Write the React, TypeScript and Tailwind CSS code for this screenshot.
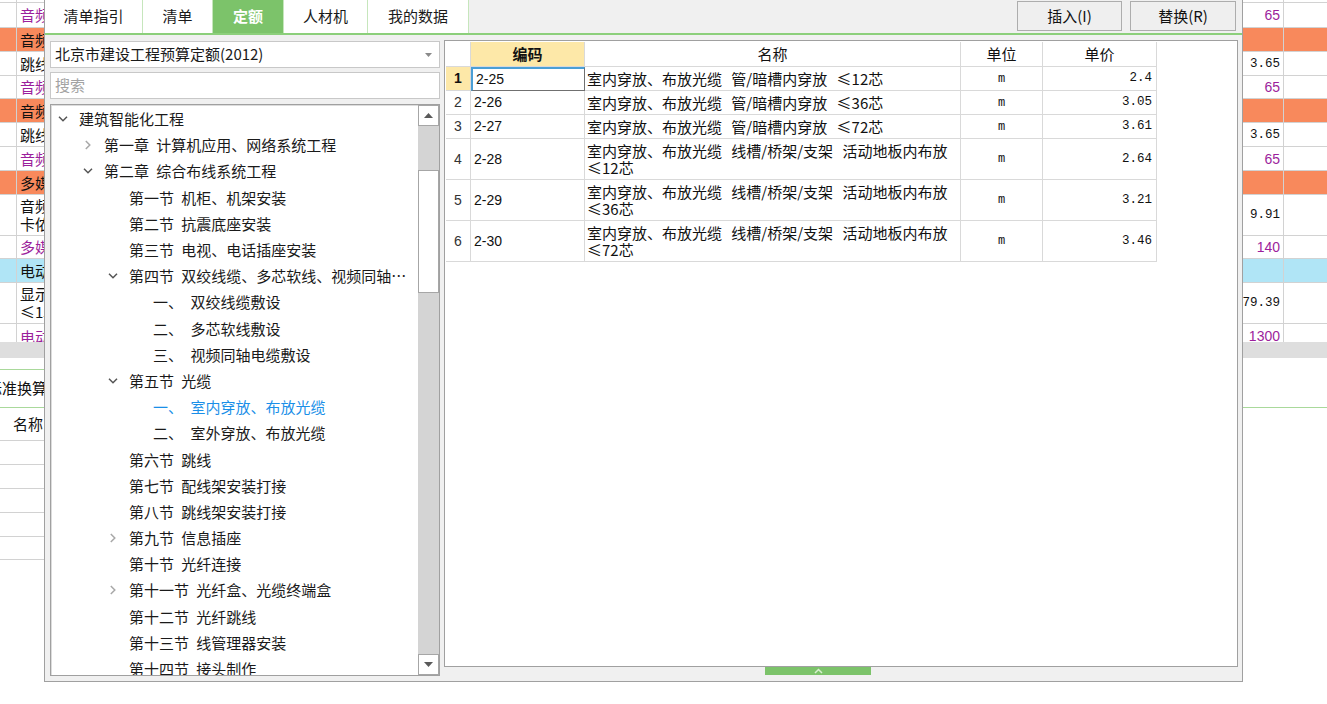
import React from 'react';

type BgRow = {
  h: string;
  bg?: string;
  lines?: string[];
  purple?: boolean;
  num?: string;
  numKind?: 'mono' | 'purple';
  clip?: boolean;
};

const bgRows: BgRow[] = [
  { h: 'h-[3px]' },
  { h: 'h-[25px]', lines: ['音频设备'], purple: true, num: '65', numKind: 'purple' },
  { h: 'h-[24px]', bg: 'bg-[#f8895c]', lines: ['音频系统'] },
  { h: 'h-[24px]', lines: ['跳线'], num: '3.65', numKind: 'mono' },
  { h: 'h-[23px]', lines: ['音频设备'], purple: true, num: '65', numKind: 'purple' },
  { h: 'h-[24px]', bg: 'bg-[#f8895c]', lines: ['音频系统'] },
  { h: 'h-[24px]', lines: ['跳线'], num: '3.65', numKind: 'mono' },
  { h: 'h-[24px]', lines: ['音频设备'], purple: true, num: '65', numKind: 'purple' },
  { h: 'h-[24px]', bg: 'bg-[#f8895c]', lines: ['多媒体系统'] },
  { h: 'h-[41px]', lines: ['音频矩阵', '卡侬头'], num: '9.91', numKind: 'mono' },
  { h: 'h-[23px]', lines: ['多媒体设备'], purple: true, num: '140', numKind: 'purple' },
  { h: 'h-[24px]', bg: 'bg-[#b0e5f6]', lines: ['电动幕布'] },
  { h: 'h-[41px]', lines: ['显示屏', '≤15'], num: '79.39', numKind: 'mono' },
  { h: 'h-[18px]', lines: ['电动幕布'], purple: true, num: '1300', numKind: 'purple', clip: true },
];

type TreeItem = {
  level: number;
  text: string;
  num?: string;
  arrow?: 'down' | 'right';
  active?: boolean;
};

const tree: TreeItem[] = [
  { level: 0, text: '建筑智能化工程', arrow: 'down' },
  { level: 1, text: '第一章 计算机应用、网络系统工程', arrow: 'right' },
  { level: 1, text: '第二章 综合布线系统工程', arrow: 'down' },
  { level: 2, text: '第一节 机柜、机架安装' },
  { level: 2, text: '第二节 抗震底座安装' },
  { level: 2, text: '第三节 电视、电话插座安装' },
  { level: 2, text: '第四节 双绞线缆、多芯软线、视频同轴…', arrow: 'down' },
  { level: 3, num: '一、', text: '双绞线缆敷设' },
  { level: 3, num: '二、', text: '多芯软线敷设' },
  { level: 3, num: '三、', text: '视频同轴电缆敷设' },
  { level: 2, text: '第五节 光缆', arrow: 'down' },
  { level: 3, num: '一、', text: '室内穿放、布放光缆', active: true },
  { level: 3, num: '二、', text: '室外穿放、布放光缆' },
  { level: 2, text: '第六节 跳线' },
  { level: 2, text: '第七节 配线架安装打接' },
  { level: 2, text: '第八节 跳线架安装打接' },
  { level: 2, text: '第九节 信息插座', arrow: 'right' },
  { level: 2, text: '第十节 光纤连接' },
  { level: 2, text: '第十一节 光纤盒、光缆终端盒', arrow: 'right' },
  { level: 2, text: '第十二节 光纤跳线' },
  { level: 2, text: '第十三节 线管理器安装' },
  { level: 2, text: '第十四节 接头制作' },
];

const indent = ['pl-[6px]', 'pl-[31px]', 'pl-[56px]', 'pl-[80px]'];

const quotaRows = [
  { n: '1', code: '2-25', name: ['室内穿放、布放光缆 管/暗槽内穿放 ≤12芯'], price: '2.4', h: 'h-[24px]' },
  { n: '2', code: '2-26', name: ['室内穿放、布放光缆 管/暗槽内穿放 ≤36芯'], price: '3.05', h: 'h-[24px]' },
  { n: '3', code: '2-27', name: ['室内穿放、布放光缆 管/暗槽内穿放 ≤72芯'], price: '3.61', h: 'h-[24px]' },
  { n: '4', code: '2-28', name: ['室内穿放、布放光缆 线槽/桥架/支架 活动地板内布放', '≤12芯'], price: '2.64', h: 'h-[41px]' },
  { n: '5', code: '2-29', name: ['室内穿放、布放光缆 线槽/桥架/支架 活动地板内布放', '≤36芯'], price: '3.21', h: 'h-[41px]' },
  { n: '6', code: '2-30', name: ['室内穿放、布放光缆 线槽/桥架/支架 活动地板内布放', '≤72芯'], price: '3.46', h: 'h-[41px]' },
];

const tabs = [
  { label: '清单指引', w: 'w-[98px]' },
  { label: '清单', w: 'w-[70px]' },
  { label: '定额', w: 'w-[71px]', active: true },
  { label: '人材机', w: 'w-[84px]' },
  { label: '我的数据', w: 'w-[101px]' },
];

function Chevron({ dir }: { dir: 'down' | 'right' }) {
  if (dir === 'down') {
    return (
      <svg width="10" height="6" viewBox="0 0 10 6">
        <path d="M1 0.8 L5 4.8 L9 0.8" fill="none" stroke="#555" strokeWidth="1.5" />
      </svg>
    );
  }
  return (
    <svg width="6" height="10" viewBox="0 0 6 10">
      <path d="M0.8 1 L4.8 5 L0.8 9" fill="none" stroke="#a8a8a8" strokeWidth="1.5" />
    </svg>
  );
}

function BackgroundSheet() {
  return (
    <div className="w-full">
      {bgRows.map((r, i) => (
        <div
          key={i}
          className={`grid grid-cols-[17px_1fr_41px_43px] border-b border-[#d2d2d2] ${r.h} ${r.bg ?? 'bg-white'} ${r.clip ? 'border-b-0' : ''}`}
        >
          <div className="border-r border-[#d2d2d2]" />
          <div
            className={`border-r border-[#d2d2d2] pl-[3px] text-[15px] leading-[18px] flex flex-col overflow-hidden ${r.clip ? 'justify-start pt-[4px]' : 'justify-center'} ${r.purple ? 'text-[#9c1f9c]' : 'text-[#111]'}`}
          >
            {r.lines?.map((l) => (
              <div key={l} className="w-[24px] overflow-hidden whitespace-nowrap">{l}</div>
            ))}
          </div>
          <div
            className={`border-r border-[#d2d2d2] pr-[3px] flex justify-end overflow-hidden ${r.clip ? 'items-start pt-[4px]' : 'items-center'}`}
          >
            {r.num && (
              <span
                className={
                  r.numKind === 'purple'
                    ? "font-['Liberation_Sans',sans-serif] text-[14px] leading-[16px] text-[#9c1f9c]"
                    : "font-['Liberation_Mono',monospace] text-[12.5px] leading-[16px] text-[#111]"
                }
              >
                {r.num}
              </span>
            )}
          </div>
          <div />
        </div>
      ))}
      <div className="h-[16px] bg-[#dedede]" />
      <div className="h-[11px]" />
      <div className="flex">
        <div className="w-[140px] h-[38px] border-t border-[#a9d99b] flex items-center">
          <div className="w-[44px] overflow-hidden">
            <span className="block -ml-[13px] text-[15px] whitespace-nowrap text-[#111]">标准换算</span>
          </div>
        </div>
      </div>
      <div className="h-px bg-[#a9d99b]" />
      <div className="w-[200px]">
        <div className="h-[33px] border-b border-[#d2d2d2] flex items-center pl-[13px] text-[15px] text-[#111]">名称</div>
        <div className="h-[24px] border-b border-[#d2d2d2]" />
        <div className="h-[24px] border-b border-[#d2d2d2]" />
        <div className="h-[24px] border-b border-[#d2d2d2]" />
        <div className="h-[24px] border-b border-[#d2d2d2]" />
        <div className="h-[23px] border-b border-[#d2d2d2]" />
      </div>
    </div>
  );
}

function TreePanel() {
  return (
    <div className="relative h-[572px] bg-white border border-[#a0a0a0] shadow-[inset_1px_1px_0_#dcdcdc] flex overflow-hidden">
      <div className="flex-1 pt-[1px] overflow-hidden [word-spacing:4px]">
        {tree.map((t, i) => (
          <div key={i} className={`flex items-center h-[26.2px] whitespace-nowrap text-[15px] leading-[18px] ${indent[t.level]}`}>
            <span className="w-[12px] mr-[10px] flex justify-center shrink-0">
              {t.arrow && <Chevron dir={t.arrow} />}
            </span>
            {t.num ? (
              <span className={t.active ? 'text-[#1a8fe8]' : 'text-[#1a1a1a]'}>
                {t.num} {t.text}
              </span>
            ) : (
              <span className="text-[#1a1a1a]">{t.text}</span>
            )}
          </div>
        ))}
      </div>
      {/* scrollbar */}
      <div className="w-[21px] shrink-0 bg-[#d4d4d4] flex flex-col">
        <div className="h-[21px] bg-white border border-[#a6a6a6] flex items-center justify-center">
          <svg width="9" height="5" viewBox="0 0 9 5"><path d="M0 5 L4.5 0 L9 5 Z" fill="#5a5a5a" /></svg>
        </div>
        <div className="h-[44px]" />
        <div className="h-[123px] bg-white border border-[#a6a6a6]" />
        <div className="flex-1" />
        <div className="h-[21px] bg-white border border-[#a6a6a6] flex items-center justify-center">
          <svg width="9" height="5" viewBox="0 0 9 5"><path d="M0 0 L4.5 5 L9 0 Z" fill="#5a5a5a" /></svg>
        </div>
      </div>
    </div>
  );
}

function QuotaTable() {
  const cell = 'border-r border-b border-[#d9d9d9]';
  return (
    <div className="h-[627px] bg-white border border-[#a0a0a0] p-[1px]">
      <div className="grid grid-cols-[25px_114px_376px_82px_114px] w-[711px] text-[15px] text-[#111]">
        <div className={`${cell} h-[25px]`} />
        <div className={`${cell} bg-[#fde8a8] flex items-center justify-center font-bold`}>编码</div>
        <div className={`${cell} flex items-center justify-center`}>名称</div>
        <div className={`${cell} flex items-center justify-center`}>单位</div>
        <div className={`${cell} flex items-center justify-center`}>单价</div>
        {quotaRows.map((r, i) => (
          <React.Fragment key={r.n}>
            <div
              className={`${cell} ${r.h} flex items-center justify-center font-['Liberation_Sans',sans-serif] text-[14px] ${i === 0 ? 'bg-[#fde8a8] font-bold' : 'text-[#333]'}`}
            >
              {r.n}
            </div>
            <div
              className={`${cell} flex items-center pl-[3px] font-['Liberation_Sans',sans-serif] text-[14px] ${i === 0 ? 'border-2 border-t-[#4a9fd6] border-l-[#4a9fd6] border-r-[#707070] border-b-[#707070] pl-[2px]' : ''}`}
            >
              {r.code}
            </div>
            <div className={`${cell} flex flex-col justify-center pl-[2px] leading-[17px] whitespace-nowrap [word-spacing:6px]`}>
              {r.name.map((l) => (
                <div key={l}>{l}</div>
              ))}
            </div>
            <div className={`${cell} flex items-center justify-center font-['Liberation_Mono',monospace] text-[12px]`}>m</div>
            <div className={`${cell} flex items-center justify-end pr-[4px] font-['Liberation_Mono',monospace] text-[12.5px]`}>
              {r.price}
            </div>
          </React.Fragment>
        ))}
      </div>
    </div>
  );
}

function QuotaDialog() {
  return (
    <div className="absolute left-[44px] top-0 w-[1199px] h-[682px] bg-[#f0f0f0] border-x border-b border-[#a0a0a0] flex flex-col">
      {/* top bar */}
      <div className="h-[33px] flex">
        <div className="flex bg-white">
          {tabs.map((t) => (
            <div
              key={t.label}
              className={`${t.w} flex items-center justify-center text-[15px] border-r border-[#c6e6bc] ${t.active ? 'bg-[#7cc36a] text-white font-bold' : 'text-[#1a1a1a]'}`}
            >
              {t.label}
            </div>
          ))}
        </div>
        <div className="flex-1 flex justify-end items-start gap-[8px] pr-[6px] pt-[1px]">
          <button className="w-[105px] h-[30px] bg-[#efefef] border border-[#adadad] text-[15px] text-[#111]">插入(I)</button>
          <button className="w-[106px] h-[30px] bg-[#efefef] border border-[#adadad] text-[15px] text-[#111]">替换(R)</button>
        </div>
      </div>
      <div className="h-[2px] bg-[#8ccf7b]" />

      {/* body */}
      <div className="flex-1 flex pl-[5px] pr-[4px] gap-[4px]">
        <div className="w-[390px] pt-[6px] flex flex-col gap-[4px]">
          <div className="h-[27px] bg-white border border-[#c8c8c8] flex items-center justify-between pl-[4px] pr-[7px]">
            <span className="text-[15px] text-[#1a1a1a]">北京市建设工程预算定额(2012)</span>
            <svg width="7" height="4" viewBox="0 0 7 4"><path d="M0 0 L3.5 4 L7 0 Z" fill="#8a8a8a" /></svg>
          </div>
          <div className="h-[27px] bg-white border border-[#c8c8c8] flex items-center pl-[4px]">
            <span className="text-[15px] text-[#a3a3a3]">搜索</span>
          </div>
          <div className="mt-[1px]">
            <TreePanel />
          </div>
        </div>
        <div className="flex-1 pt-[5px] flex flex-col">
          <QuotaTable />
          <div className="ml-[321px] w-[106px] h-[8px] bg-[#7cc36a] flex items-center justify-center">
            <svg width="9" height="6" viewBox="0 0 9 6"><path d="M1 5 L4.5 1.5 L8 5" fill="none" stroke="#d8f0d0" strokeWidth="1.5" /></svg>
          </div>
        </div>
      </div>
    </div>
  );
}

export default function App() {
  return (
    <div className="relative w-[1327px] h-[704px] bg-white overflow-hidden font-['Noto_Sans_CJK_SC',sans-serif] text-[#111]">
      <BackgroundSheet />
      <QuotaDialog />
    </div>
  );
}
